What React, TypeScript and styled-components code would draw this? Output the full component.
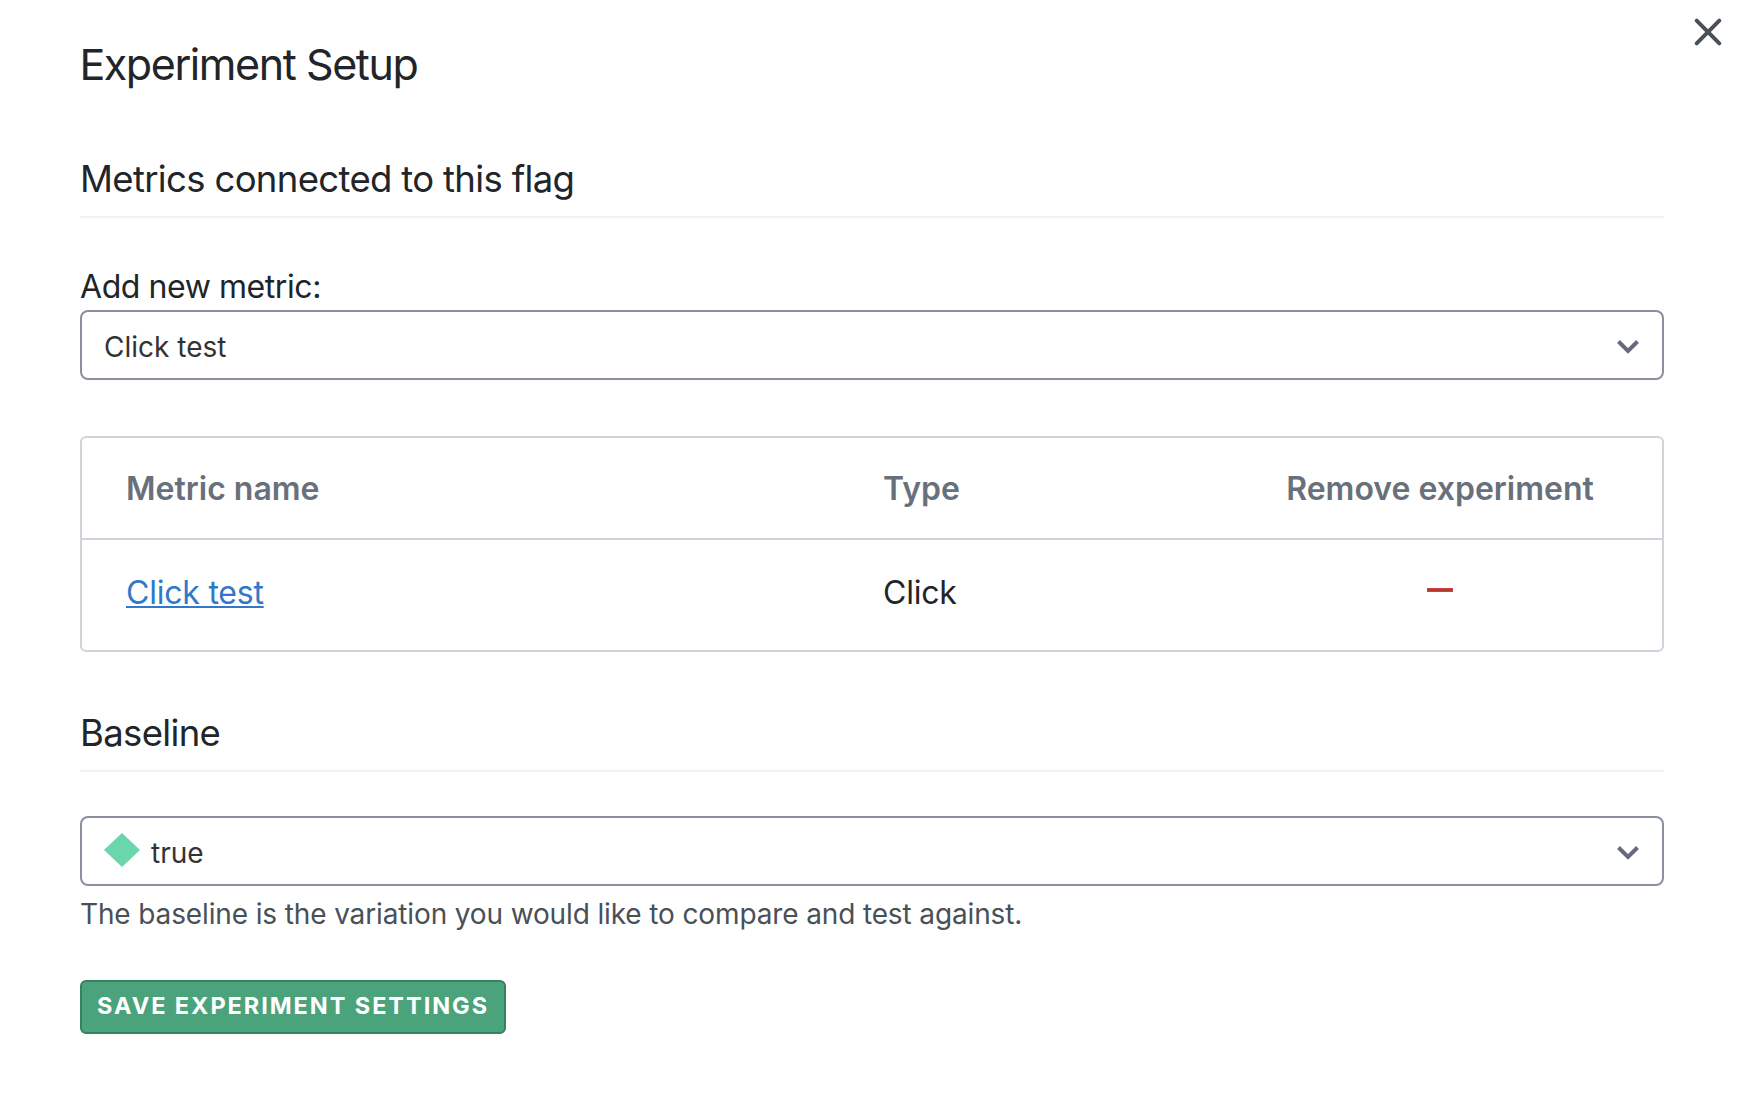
import React from "react";
import styled, { createGlobalStyle } from "styled-components";

const GlobalStyle = createGlobalStyle`
  *, *::before, *::after { box-sizing: border-box; }
  body {
    margin: 0;
    background: #ffffff;
    color: #212529;
    font-family: Inter, "Liberation Sans", sans-serif;
    -webkit-font-smoothing: antialiased;
  }
  button { font-family: inherit; cursor: pointer; }
`;

const Modal = styled.main`
  display: flex;
  align-items: flex-start;
  width: 1748px;
  height: 1114px;
  padding-left: 80px;
  overflow: hidden;
`;

const Content = styled.div`
  display: flex;
  flex-direction: column;
  width: 1584px;
  padding-top: 38px;
`;

const CloseButton = styled.button`
  display: flex;
  margin: 16px 0 0 28px;
  padding: 0;
  border: 0;
  background: none;
  color: #495057;
`;

const Title = styled.h1`
  margin: 0 0 0 -0.6px;
  font-size: 43px;
  line-height: 52px;
  font-weight: 400;
  letter-spacing: -1.43px;
`;

const SectionTitle = styled.h2<{ $gap: number }>`
  margin: ${({ $gap }) => $gap}px 0 0;
  padding-bottom: 15px;
  border-bottom: 2px solid #f1f2f3;
  font-size: 36.5px;
  line-height: 44px;
  font-weight: 400;
  letter-spacing: -0.66px;
`;

const Label = styled.label`
  margin-top: 49px;
  font-size: 32px;
  line-height: 40px;
  letter-spacing: -0.43px;
`;

const Select = styled.div<{ $gap: number }>`
  display: flex;
  align-items: center;
  height: 70px;
  margin-top: ${({ $gap }) => $gap}px;
  padding: 0 21px 0 22px;
  border: 2px solid #8b909f;
  border-radius: 8px;
  color: #333333;
`;

const Diamond = styled.svg`
  flex: none;
  margin: 0 11px 2px 0;
`;

const SelectValue = styled.span`
  flex: 1;
  padding-top: 4px;
  font-size: 28px;
  line-height: 34px;
`;

const ChevronIcon = styled.svg`
  flex: none;
  margin-top: 4px;
`;

const Table = styled.div`
  margin-top: 56px;
  border: 2px solid #ced4da;
  border-radius: 6px;
`;

const Row = styled.div<{ $head?: boolean }>`
  display: grid;
  grid-template-columns: 757px 1fr 360px;
  align-items: center;
  height: ${({ $head }) => ($head ? 102 : 110)}px;
  padding: ${({ $head }) => ($head ? "2px 42px 0 44px" : "0 42px 4px 44px")};
  border-bottom: ${({ $head }) => ($head ? "2px solid #ced4da" : "0")};
  color: ${({ $head }) => ($head ? "#68717b" : "inherit")};
  font-size: 32px;
  line-height: 40px;
  font-weight: ${({ $head }) => ($head ? 600 : 400)};
  letter-spacing: ${({ $head }) => ($head ? 0 : -0.22)}px;
`;

const CenterCell = styled.div`
  display: flex;
  justify-content: center;
`;

const MetricLink = styled.a`
  color: #3278c8;
  text-decoration: underline;
  text-decoration-thickness: 2px;
  text-underline-offset: 2px;
  text-decoration-skip-ink: none;
`;

const RemoveButton = styled.button`
  display: flex;
  padding: 15px 7px 21px;
  border: 0;
  background: none;
`;

const MinusBar = styled.span`
  width: 26px;
  height: 4px;
  border: 1px solid #c9453e;
  background: #b5382f;
`;

const Help = styled.p`
  margin: 11px 0 0;
  color: #495057;
  font-size: 28px;
  line-height: 34px;
  letter-spacing: -0.13px;
`;

const SaveButton = styled.button`
  width: 426px;
  height: 54px;
  margin-top: 49px;
  padding: 0 0 2px;
  border: 2px solid #36815f;
  border-radius: 6px;
  background: #4ba37b;
  color: #ffffff;
  font-size: 23.5px;
  line-height: 30px;
  font-weight: 650;
  letter-spacing: 1.95px;
  text-transform: uppercase;
  white-space: nowrap;
`;

const Chevron = () => (
  <ChevronIcon width="26" height="18" viewBox="0 0 26 18" fill="none">
    <path d="M3.5 3.5 13 13 22.5 3.5" stroke="#656b7b" strokeWidth="4" />
  </ChevronIcon>
);

export default function App() {
  return (
    <>
      <GlobalStyle />
      <Modal>
        <Content>
          <Title>Experiment Setup</Title>

          <SectionTitle $gap={67}>Metrics connected to this flag</SectionTitle>
          <Label>Add new metric:</Label>
          <Select $gap={3}>
            <SelectValue>Click test</SelectValue>
            <Chevron />
          </Select>

          <Table>
            <Row $head>
              <div>Metric name</div>
              <div>Type</div>
              <CenterCell>Remove experiment</CenterCell>
            </Row>
            <Row>
              <div>
                <MetricLink>Click test</MetricLink>
              </div>
              <div>Click</div>
              <CenterCell>
                <RemoveButton aria-label="Remove">
                  <MinusBar />
                </RemoveButton>
              </CenterCell>
            </Row>
          </Table>

          <SectionTitle $gap={59}>Baseline</SectionTitle>
          <Select $gap={44}>
            <Diamond width="36" height="34" viewBox="0 0 36 34">
              <path d="M18 0 36 17 18 34 0 17Z" fill="#6bd6ab" />
            </Diamond>
            <SelectValue>true</SelectValue>
            <Chevron />
          </Select>
          <Help>The baseline is the variation you would like to compare and test against.</Help>
          <SaveButton>Save experiment settings</SaveButton>
        </Content>
        <CloseButton aria-label="Close">
          <svg width="32" height="32" viewBox="0 0 32 32" fill="none">
            <path
              d="M4.7 4.7 27.3 27.3M27.3 4.7 4.7 27.3"
              stroke="currentColor"
              strokeWidth="4"
              strokeLinecap="round"
            />
          </svg>
        </CloseButton>
      </Modal>
    </>
  );
}
